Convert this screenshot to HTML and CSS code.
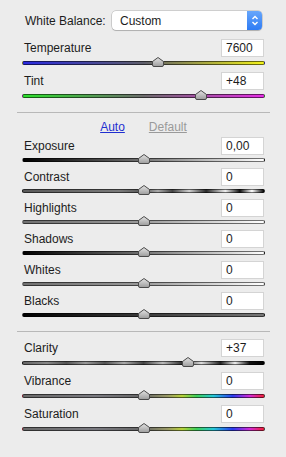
FILE: index.html
```html
<!DOCTYPE html>
<html lang="en">
<head>
    <meta charset="UTF-8">
    <title>Basic</title>
    <link rel="stylesheet" href="styles.css">
</head>
<body>
    <svg width="0" height="0" class="defs">
        <defs>
            <linearGradient id="thumbFill" x1="0" y1="0" x2="0" y2="1">
                <stop offset="0" stop-color="#e4e4e4"/>
                <stop offset="1" stop-color="#9c9c9c"/>
            </linearGradient>
            <symbol id="thumb" viewBox="0 0 12 10">
                <path d="M6 0.5 L11.5 4.5 L11.5 8 Q11.5 9.5 10 9.5 L2 9.5 Q0.5 9.5 0.5 8 L0.5 4.5 Z" fill="url(#thumbFill)" stroke="#4a4a4a" stroke-width="1"/>
            </symbol>
        </defs>
    </svg>

    <div class="panel">
        <div class="wb">
            <span class="wb-label">White Balance:</span>
            <div class="select">
                <span>Custom</span>
                <span class="stepper">
                    <svg width="8" height="11" viewBox="0 0 8 11"><path d="M1.5 4 L4 1.5 L6.5 4 M1.5 7 L4 9.5 L6.5 7" fill="none" stroke="#fff" stroke-width="1.4"/></svg>
                </span>
            </div>
        </div>

        <div class="group wide">
            <div class="control">
                <div class="head"><span>Temperature</span><input class="value" value="7600"></div>
                <div class="track t-temp"><svg class="thumb" style="left:56%"><use href="#thumb"/></svg></div>
            </div>
            <div class="control">
                <div class="head"><span>Tint</span><input class="value" value="+48"></div>
                <div class="track t-tint"><svg class="thumb" style="left:73.7%"><use href="#thumb"/></svg></div>
            </div>
        </div>

        <hr class="sep">

        <div class="links"><a href="#" class="auto">Auto</a><a href="#" class="default">Default</a></div>

        <div class="group">
            <div class="control">
                <div class="head"><span>Exposure</span><input class="value" value="0,00"></div>
                <div class="track t-exposure"><svg class="thumb" style="left:50%"><use href="#thumb"/></svg></div>
            </div>
            <div class="control">
                <div class="head"><span>Contrast</span><input class="value" value="0"></div>
                <div class="track t-contrast"><svg class="thumb" style="left:50%"><use href="#thumb"/></svg></div>
            </div>
            <div class="control">
                <div class="head"><span>Highlights</span><input class="value" value="0"></div>
                <div class="track t-highlights"><svg class="thumb" style="left:50%"><use href="#thumb"/></svg></div>
            </div>
            <div class="control">
                <div class="head"><span>Shadows</span><input class="value" value="0"></div>
                <div class="track t-shadows"><svg class="thumb" style="left:50%"><use href="#thumb"/></svg></div>
            </div>
            <div class="control">
                <div class="head"><span>Whites</span><input class="value" value="0"></div>
                <div class="track t-whites"><svg class="thumb" style="left:50%"><use href="#thumb"/></svg></div>
            </div>
            <div class="control">
                <div class="head"><span>Blacks</span><input class="value" value="0"></div>
                <div class="track t-blacks"><svg class="thumb" style="left:50%"><use href="#thumb"/></svg></div>
            </div>
        </div>

        <hr class="sep">

        <div class="group wide presence">
            <div class="control">
                <div class="head"><span>Clarity</span><input class="value" value="+37"></div>
                <div class="track t-clarity"><svg class="thumb" style="left:68.3%"><use href="#thumb"/></svg></div>
            </div>
            <div class="control">
                <div class="head"><span>Vibrance</span><input class="value" value="0"></div>
                <div class="track t-color"><svg class="thumb" style="left:50%"><use href="#thumb"/></svg></div>
            </div>
            <div class="control">
                <div class="head"><span>Saturation</span><input class="value" value="0"></div>
                <div class="track t-color"><svg class="thumb" style="left:50%"><use href="#thumb"/></svg></div>
            </div>
        </div>
    </div>
</body>
</html>
```

FILE: styles.css
```css
body {
    margin: 0;
    background-color: #ececec;
    font-family: "Liberation Sans", Arial, sans-serif;
    font-size: 12px;
    color: #1c1c1c;
}
.defs {
    position: absolute;
}
.panel {
    padding: 11px 21px 0 22px;
}
.wb {
    display: flex;
    align-items: center;
    height: 19px;
    margin-bottom: 9px;
}
.wb-label {
    width: 87px;
    padding-left: 3px;
}
.select {
    flex: 1;
    margin-right: 3px;
    height: 19px;
    box-sizing: border-box;
    display: flex;
    align-items: center;
    justify-content: space-between;
    background-color: #fff;
    border-radius: 4px;
    box-shadow: 0 0 0 0.5px rgba(0,0,0,0.25), 0 1px 1px rgba(0,0,0,0.15);
    padding-left: 8px;
    overflow: hidden;
}
.stepper {
    width: 15px;
    height: 19px;
    display: flex;
    align-items: center;
    justify-content: center;
    background: linear-gradient(#67a6fb, #2f7cf4);
}
.control {
    margin-bottom: 6px;
}
.wide .control {
    margin-bottom: 7px;
}
.head {
    display: flex;
    align-items: center;
    justify-content: space-between;
    height: 18px;
    padding-left: 2px;
}
.value {
    width: 43px;
    height: 18px;
    box-sizing: border-box;
    margin: 0 1px 0 0;
    padding: 0 4px;
    border: 1px solid #d4d4d4;
    background-color: #fff;
    font-family: inherit;
    font-size: 12px;
    color: #1c1c1c;
    outline: none;
}
.track {
    position: relative;
    height: 4px;
    margin-top: 3px;
    box-sizing: border-box;
    border: 1px solid rgba(0,0,0,0.55);
    border-radius: 2px;
}
.wide .track {
    margin-top: 4px;
}
.thumb {
    position: absolute;
    top: -5px;
    width: 12px;
    height: 10px;
    margin-left: -6px;
}
.t-temp {
    background: linear-gradient(to right, #2a2ae0, #5e5e6a 50%, #f2f21a);
}
.t-tint {
    background: linear-gradient(to right, #2ee02e, #6c6c6c 50%, #e62ee6);
}
.t-exposure, .t-shadows {
    background: linear-gradient(to right, #000, #666 45%, #fff);
}
.t-contrast {
    background: linear-gradient(to right, #5a5a5a, #7a7a7a 40%, #555 50%, #aaa 56%, #444 62%, #d0d0d0 69%, #2a2a2a 76%, #eee 84%, #111 90%, #fff 95%, #000);
}
.t-highlights, .t-whites {
    background: linear-gradient(to right, #707070, #9a9a9a 50%, #fff);
}
.t-blacks {
    background: linear-gradient(to right, #000, #3a3a3a 50%, #777);
}
.t-clarity {
    background: linear-gradient(to right, #666, #888 10%, #555 18%, #999 26%, #555 34%, #aaa 42%, #444 50%, #bbb 58%, #333 66%, #ddd 74%, #222 82%, #eee 88%, #111 94%, #000);
}
.t-color {
    background: linear-gradient(to right, #6a6a6a, #7a7a80 30%, #666 50%, #9a9a66 60%, #b8d23a 66%, #3ed05a 72%, #26c8d8 79%, #2a3cf0 87%, #d42ad8 94%, #f0203a);
}
.sep {
    margin: 14px -5px 0 -5px;
    border: none;
    border-top: 1px solid #b8b8b8;
    height: 0;
}
.links {
    display: flex;
    justify-content: center;
    gap: 24px;
    line-height: 14px;
    margin: 7px 0 3px 0;
}
.links a {
    text-decoration: underline;
}
.auto {
    color: #1f2fd0;
}
.default {
    color: #9a9a9a;
}
.presence {
    margin-top: 7px;
}
```
